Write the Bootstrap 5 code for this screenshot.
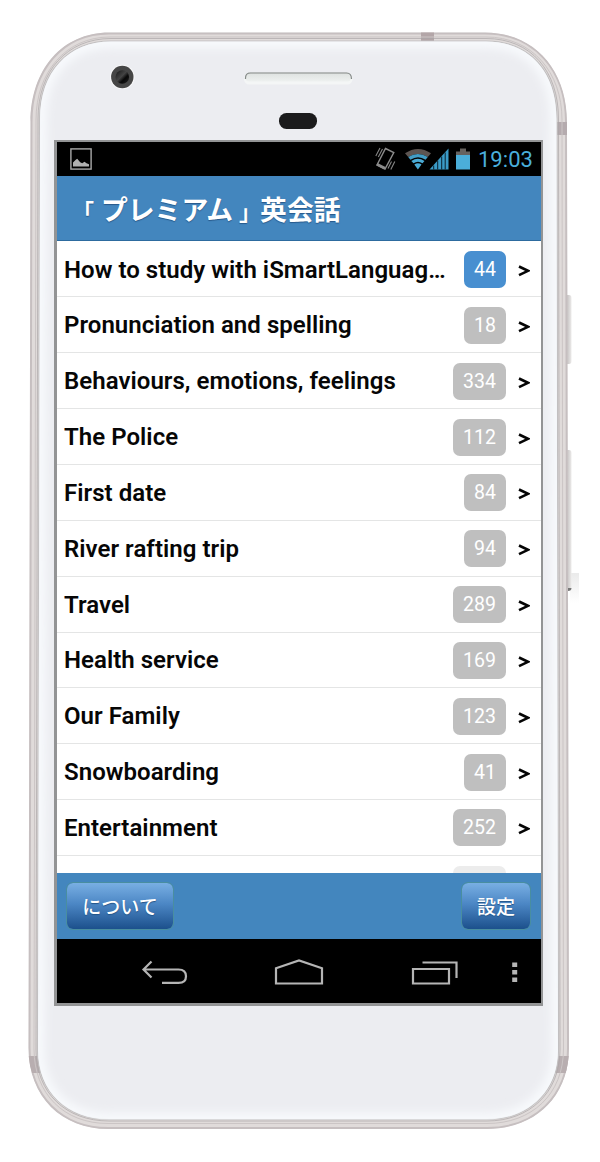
<!DOCTYPE html>
<html lang="ja">
<head>
<meta charset="utf-8">
<meta name="viewport" content="width=device-width, initial-scale=1">
<title>「プレミアム」英会話</title>
<link href="https://cdn.jsdelivr.net/npm/bootstrap@5.3.0/dist/css/bootstrap.min.css" rel="stylesheet">
<style>
body{background:#fff;font-family:Roboto,"Noto Sans CJK JP",sans-serif;overflow:hidden}
.phone{width:600px;height:1162px;padding:140px 57px 0 54px}
.shell{left:0;top:0;z-index:0}
.device-screen{height:866px;border:2px solid #939495;border-left-width:3px;border-bottom-width:3px;z-index:1;background:#fff}
.statusbar{height:34px;background:#000;color:#4aaedb;padding:0 8px 0 13px;flex:none}
.clock{font-size:22px;line-height:34px;padding-top:2px;letter-spacing:.05px}
.titlebar{height:65px;background:#4386be;border-bottom:1px solid #2d6b9f;padding:2px 0 0 17px;flex:none}
.titlebar h1{font-size:26.8px;font-weight:700;color:#fff;font-family:"Noto Sans CJK JP",sans-serif;text-shadow:0 1px 1px #28598a;line-height:1;white-space:nowrap}
.bracket{display:inline-block;width:27px;font-size:22px}
.bracket.open{text-indent:-2px}
.bracket.close-q{text-indent:6px}
.topics{height:631.5px;flex:none;padding-top:.6px}
.topics .list-group-item{height:55.85px;flex:none;border:0;border-bottom:1px solid #e4e5e5;padding:1px 11px 0 7px;color:#060606;background:#fff}
.topic-name{font-size:24px;font-weight:600;line-height:36px;width:384px;white-space:nowrap;letter-spacing:.04px}
.count{font-size:19.5px;font-weight:400;background:#bfbfbf;border-radius:7px;height:37px;line-height:38px;color:#fff;width:42px;text-align:center}
.count.wide{width:53px}
.count.current{background:#488fd0}
.count.faded{background:#ececec}
.arrow{width:12px;height:12px;margin-left:12px;margin-top:3px}
.toolbar{height:66px;background:#4386be;padding:0 10px 0 9px;flex:none}
.btn-gloss{height:48px;padding:0;border:1.5px solid #498ea0!important;border-radius:7px;background:linear-gradient(#79afe3,#4c87c5 45%,#1c508c) padding-box;color:#fff!important;font-size:19px;font-weight:500;line-height:45px;text-shadow:0 1px 1px #235589;font-family:"Noto Sans CJK JP",sans-serif}
.softkeys{background:#000;flex:1}
</style>
</head>
<body>
<main class="phone position-relative">
<svg class="shell position-absolute" width="600" height="1162" viewBox="0 0 600 1162" aria-hidden="true">
 <defs>
  <linearGradient id="camG" x1="0" y1="0" x2="1" y2="1"><stop offset="0" stop-color="#151515"/><stop offset=".45" stop-color="#444"/><stop offset=".65" stop-color="#080808"/><stop offset="1" stop-color="#222"/></linearGradient>
  <linearGradient id="knob" x1="0" x2="1"><stop offset="0" stop-color="#bdb9b9"/><stop offset="1" stop-color="#ecebea"/></linearGradient>
  <linearGradient id="fade" x1="0" x2="0" y1="0" y2="1"><stop offset="0" stop-color="#ccc"/><stop offset="1" stop-color="#fff"/></linearGradient>
  <linearGradient id="spk" x1="0" x2="0" y1="0" y2="1"><stop offset="0" stop-color="#dde1df"/><stop offset="1" stop-color="#eef1f0"/></linearGradient>
  <filter id="soft" x="-10%" y="-10%" width="120%" height="120%"><feGaussianBlur stdDeviation="5"/></filter>
  <clipPath id="faceClip"><path d="M111 41.5H486C530 41.5 556.5 72 556.5 119L558 1050C558 1092 528 1119.5 487 1119.5H109C67 1119.5 38 1092 38 1050L40 119C40 72 68 41.5 111 41.5Z"/></clipPath>
  <clipPath id="bodyClip"><path d="M109 32.5H485C535 32.5 567 70 567 122L569 1048C569 1097 535 1129 487 1129H108C62 1129 28.500 1097 28.500 1048L30.500 122C30.500 70 62 32.500 109 32.500Z"/></clipPath>
 </defs>
 <path d="M566 295h3q2.500 0 2.500 3v63q0 3-2.500 3h-3z" fill="url(#knob)"/>
 <path d="M570 573h9v30h-9z" fill="url(#fade)" opacity=".4"/>
 <path d="M566 450h3q2.500 0 2.500 3v134q0 3-2.500 3h-3z" fill="url(#knob)"/>
 <path d="M568 588h3.500q0 3-3.500 3z" fill="#777"/>
 <g clip-path="url(#bodyClip)">
  <path d="M109 32.5H485C535 32.5 567 70 567 122L569 1048C569 1097 535 1129 487 1129H108C62 1129 28.500 1097 28.500 1048L30.500 122C30.500 70 62 32.500 109 32.500Z" fill="#e0dbda" stroke="#c6bfc0" stroke-width="4"/>
  <path d="M421 32h13v9h-13z" fill="#b3a6a8"/>
  <path d="M555 122h13v13h-13z" fill="#b5abae"/>
  <path d="M27 1056h15l6 17H32zM572 1056h-15l-5 17h20z" fill="#b8aeb0"/>
 </g>
 <path d="M110 37H486C532 37 562 72 562 120L563.500 1049C563.500 1094 532 1123.500 487 1123.500H108C64 1123.500 34 1094 34 1049L36 120C36 72 66 37 110 37Z" fill="none" stroke="#cbc5c5" stroke-width="1"/>
 <path d="M111 41H486C530 41 557 72 557 119L558.500 1050C558.500 1092 528 1119.500 487 1119.500H109C67 1119.500 37.500 1092 37.500 1050L39.500 119C39.500 72 68 41 111 41Z" fill="#ecedf1" stroke="#c2c0c1" stroke-width="1.200"/>
 <g clip-path="url(#faceClip)">
  <path d="M111 41.500H486C530 41.500 556.500 72 556.500 119L558 1050C558 1092 528 1119.500 487 1119.500H109C67 1119.500 38 1092 38 1050L40 119C40 72 68 41.500 111 41.500Z" fill="none" stroke="#f8fafd" stroke-width="13" filter="url(#soft)"/>
 </g>
 <path d="M111 38.500H486C531 38.500 558.500 71 558.500 119L560 1050C560 1093 529 1121 487 1121H109C66 1121 36 1093 36 1050L38 119C38 71 67 38.500 111 38.500Z" fill="none" stroke="#aaa6a7" stroke-width=".7"/>
 <circle cx="122.300" cy="77" r="12.300" fill="#f8f8f9"/>
 <circle cx="122.300" cy="77" r="11.200" fill="#464646"/>
 <circle cx="122.300" cy="77" r="6.800" fill="url(#camG)"/>
 <rect x="244" y="74" width="108.500" height="10.500" rx="5.200" fill="#f4f6f6"/>
 <rect x="245" y="72.500" width="106.500" height="9" rx="4.500" fill="url(#spk)"/>
 <path d="M245.500 79v-1q0-5 5-5h96q5 0 5 6" fill="none" stroke="#858a88" stroke-width="1.200"/>
 <rect x="279" y="113" width="38" height="16" rx="7.500" fill="#1b1b1c"/>
</svg>

<section class="device-screen position-relative d-flex flex-column">
 <div class="statusbar d-flex align-items-center">
  <svg width="22" height="22" viewBox="0 0 22 22" fill="none"><rect x=".9" y=".9" width="20.200" height="20.200" stroke="#a9a9a9" stroke-width="1.400"/><path d="M3 18.500v-4l2.500-2.600 1.700-1.200 3 3.500 2 1 2.300-1.500 2 1.500 2.500 1v2.300z" fill="#b0b0b0"/></svg>
  <svg class="ms-auto me-2" width="99" height="28" viewBox="371 144.500 99 28" fill="none">
   <path d="M385.500 148l8.300 4-8.800 16.500-8-4z" stroke="#8c8c8c" stroke-width="1.400"/><path d="M377.500 162.500l8 4-1.200 2.500-8-4z" fill="#8c8c8c"/><path d="M380 147.500l-4.200 8M382.500 148.500l-4.200 8M394.800 161l-4 8M391.500 161l-3.500 7" stroke="#858585" stroke-width="1.100"/>
   <path d="M405 152.800q13-8.500 26 0l-3.200 3.600q-9.800-6-19.600 0z" fill="#5d5552"/>
   <path d="M408.200 156.400q9.600-6 19.600 0l-2.200 2.800q-7.500-5-15.200 0z" fill="#429dc6"/><path d="M411.300 160.400q6.500-4.500 13.200 0l-2 2.300q-4.500-3-9 0z" fill="#4aabd5"/><path d="M414.300 164.100q3.600-2.500 7.200 0l-3.600 5z" fill="#4aabd5"/>
   <path d="M429.500 169l19-21v21z" fill="#3b9bc7"/><path d="M433.700 165v4M437.700 160v9M441.700 156v13M445.200 152v17" stroke="#09202e"/>
   <path d="M456 151h4v-3h6v3h4v3.500h-14z" fill="#66625f"/><path d="M456 154.500h14V169h-14z" fill="#4baed9"/>
  </svg>
  <span class="clock">19:03</span>
 </div>
 <header class="titlebar d-flex align-items-center"><h1 class="m-0"><span class="bracket open">「</span>プレミアム<span class="bracket close-q">」</span>英会話</h1></header>
 <div class="topics list-group list-group-flush rounded-0 overflow-hidden" id="topics"></div>
 <footer class="toolbar d-flex align-items-center justify-content-between">
  <button class="btn btn-gloss" style="width:108px">について</button>
  <button class="btn btn-gloss" style="width:70px">設定</button>
 </footer>
 <nav class="softkeys">
  <svg width="484" height="64" viewBox="57 939 484 64" fill="none" stroke="#b5b5b5" stroke-width="2.200">
   <path d="M151.500 961.500l-8 8 8 8M144 969.500h34.500q7.500 0 7.500 6.700t-7.500 6.700H162"/>
   <path d="M276 983.500v-15.300l23-7.700 23 7.700v15.300z"/>
   <path d="M413 969h36v14.500h-36zM422.500 962.500H456.500V978"/>
   <path d="M514.700 962.500v20" stroke-width="5" stroke-dasharray="4.500 3"/>
  </svg>
 </nav>
</section>
</main>
<script src="https://cdn.jsdelivr.net/npm/bootstrap@5.3.0/dist/js/bootstrap.bundle.min.js"></script>
<script>
const topics=[["How to study with iSmartLanguag…",44],["Pronunciation and spelling",18],["Behaviours, emotions, feelings",334],["The Police",112],["First date",84],["River rafting trip",94],["Travel",289],["Health service",169],["Our Family",123],["Snowboarding",41],["Entertainment",252],["",""]];
document.getElementById("topics").innerHTML=topics.map(([name,n],i)=>`<div class="list-group-item d-flex align-items-center"><span class="topic-name">${name}</span><span class="count ms-auto ${n===""||n>99?"wide":""} ${n===""?"faded":""} ${i?"":"current"}">${n}</span>${n===""?'<span class="arrow"></span>':'<svg class="arrow" viewBox="0 0 12 12"><path d="M1 1.500L10 5.800L1 10.200" fill="none" stroke="#050505" stroke-width="2.600"/></svg>'}</div>`).join("");
</script>
</body>
</html>
